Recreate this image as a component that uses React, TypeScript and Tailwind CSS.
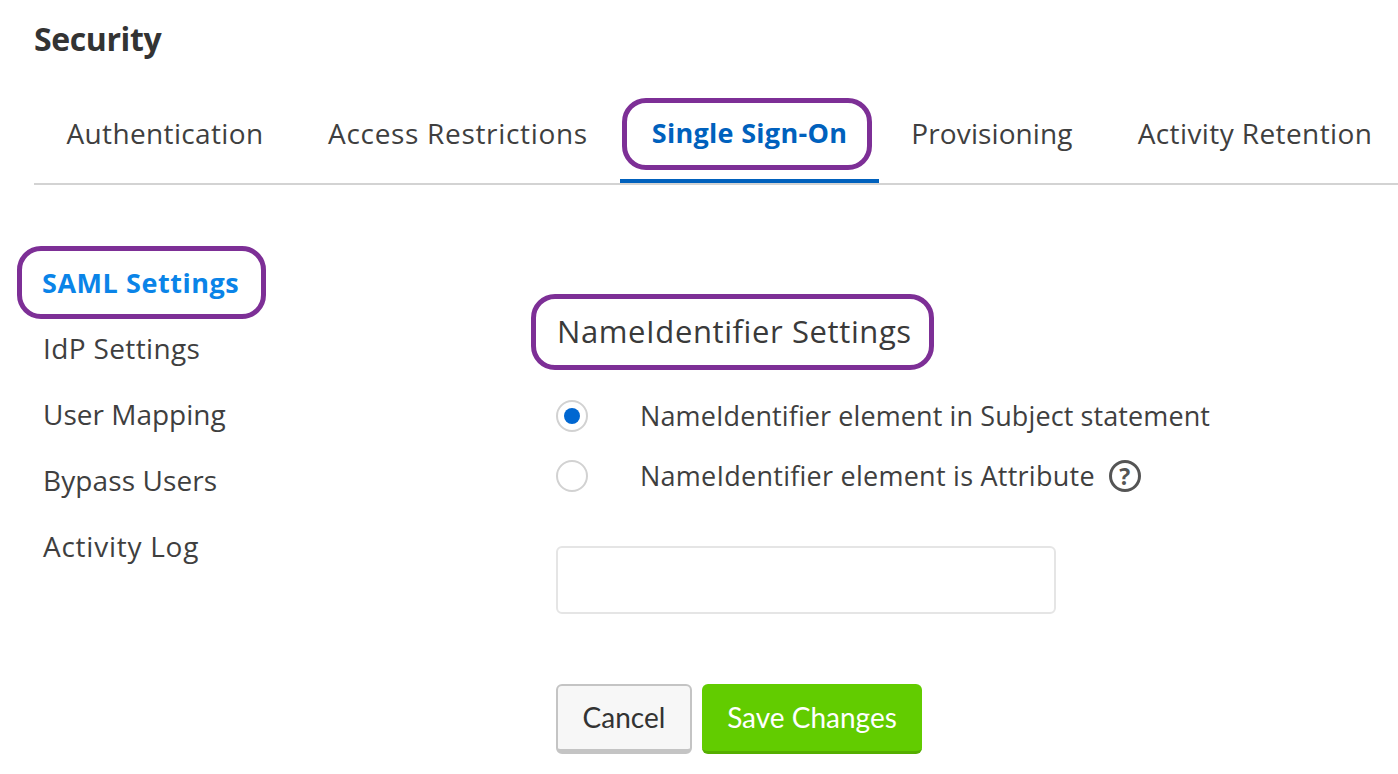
const tabs = [
  { label: 'Authentication', width: 'w-[262px]', track: 'tracking-[0.35px]' },
  { label: 'Access Restrictions', width: 'w-[324px]', track: 'tracking-[0.68px]' },
  { label: 'Single Sign-On', width: 'w-[259px]', track: 'tracking-[0.3px]' },
  { label: 'Provisioning', width: 'w-[226px]', track: 'tracking-[0.1px]' },
  { label: 'Activity Retention', width: 'w-[300px]', track: 'tracking-[0.4px]' },
]
const sideItems = [
  { label: 'IdP Settings', track: 'tracking-[0.37px]' },
  { label: 'User Mapping', track: 'tracking-[0px]' },
  { label: 'Bypass Users', track: 'tracking-[0.1px]' },
  { label: 'Activity Log', track: 'tracking-[0.75px]' },
]

export default function App() {
  return (
    <div className="w-[1398px] h-[774px] overflow-hidden bg-white text-[#3f3f3f] font-['Open_Sans','Liberation_Sans',sans-serif]">
      <div className="pl-[34px] pt-[18px]">
        <h1 className="text-[32px] leading-[42px] font-bold tracking-[-0.4px] text-[#333333]">Security</h1>

        <div className="mt-[40px] flex h-[85px] border-b-2 border-[#d3d3d3]">
          {tabs.map((t) => {
            const active = t.label === 'Single Sign-On'
            return (
              <div
                key={t.label}
                className={`relative flex h-[83px] shrink-0 items-center justify-center whitespace-nowrap ${t.width} ${t.track} ${active ? 'border-b-4 border-[#0061bd] pb-[12px] text-[27px] font-bold text-[#0061bd]' : 'pb-[18px] text-[28px]'}`}
              >
                {t.label}
                {active && (
                  <span className="absolute left-[2px] right-[7px] top-[-2px] h-[72px] rounded-[24px] border-[5px] border-[#7d2f96]" />
                )}
              </div>
            )
          })}
        </div>

        <div className="flex">
          <nav className="w-[522px] shrink-0 pt-[65px] pl-[8px]">
            <div className="relative flex h-[66px] items-center text-[27px] font-bold tracking-[0.55px] text-[#0a84e8]">
              SAML Settings
              <span className="absolute -left-[25px] top-[-4px] h-[73px] w-[249px] rounded-[24px] border-[5px] border-[#7d2f96]" />
            </div>
            {sideItems.map((s) => (
              <div key={s.label} className={`flex h-[66px] items-center pb-[2px] pl-[1px] text-[28px] ${s.track}`}>
                {s.label}
              </div>
            ))}
          </nav>

          <main className="pt-[109px]">
            <div className="-ml-[25px] flex h-[76px] w-[403px] items-center rounded-[24px] border-[5px] border-[#7d2f96] pb-[2px] pl-[21px] text-[31px] tracking-[0.6px] text-[#3a3a3a]">
              NameIdentifier Settings
            </div>

            <div className="mt-[16px] flex h-[60px] items-center">
              <span className="flex h-[32px] w-[32px] items-center justify-center rounded-full border-2 border-[#d2d2d2]">
                <span className="h-[16px] w-[16px] rounded-full bg-[#0067d1]" />
              </span>
              <span className="ml-[52px] text-[27px] tracking-[0.1px]">NameIdentifier element in Subject statement</span>
            </div>
            <div className="flex h-[60px] items-center">
              <span className="h-[32px] w-[32px] rounded-full border-2 border-[#d2d2d2]" />
              <span className="ml-[52px] text-[27px] tracking-[0.25px]">NameIdentifier element is Attribute</span>
              <span className="ml-[14px] flex h-[32px] w-[32px] items-center justify-center rounded-full border-[3px] border-[#555555] text-[23px] font-bold text-[#555555]">?</span>
            </div>

            <input className="mt-[40px] block h-[68px] w-[500px] rounded-[6px] border-2 border-[#e5e5e5] bg-white" />

            <div className="mt-[70px] flex gap-[10px] font-['Lato','Liberation_Sans',sans-serif] text-[28px]">
              <button className="h-[70px] w-[136px] rounded-[6px] border-2 border-b-[5px] border-[#c4c4c4] bg-[#f7f7f7] pb-[1px] text-[#333333]">Cancel</button>
              <button className="h-[70px] w-[220px] rounded-[6px] border-b-[3px] border-[#55ae00] bg-[#62cc00] pb-[1px] text-white">Save Changes</button>
            </div>
          </main>
        </div>
      </div>
    </div>
  )
}
